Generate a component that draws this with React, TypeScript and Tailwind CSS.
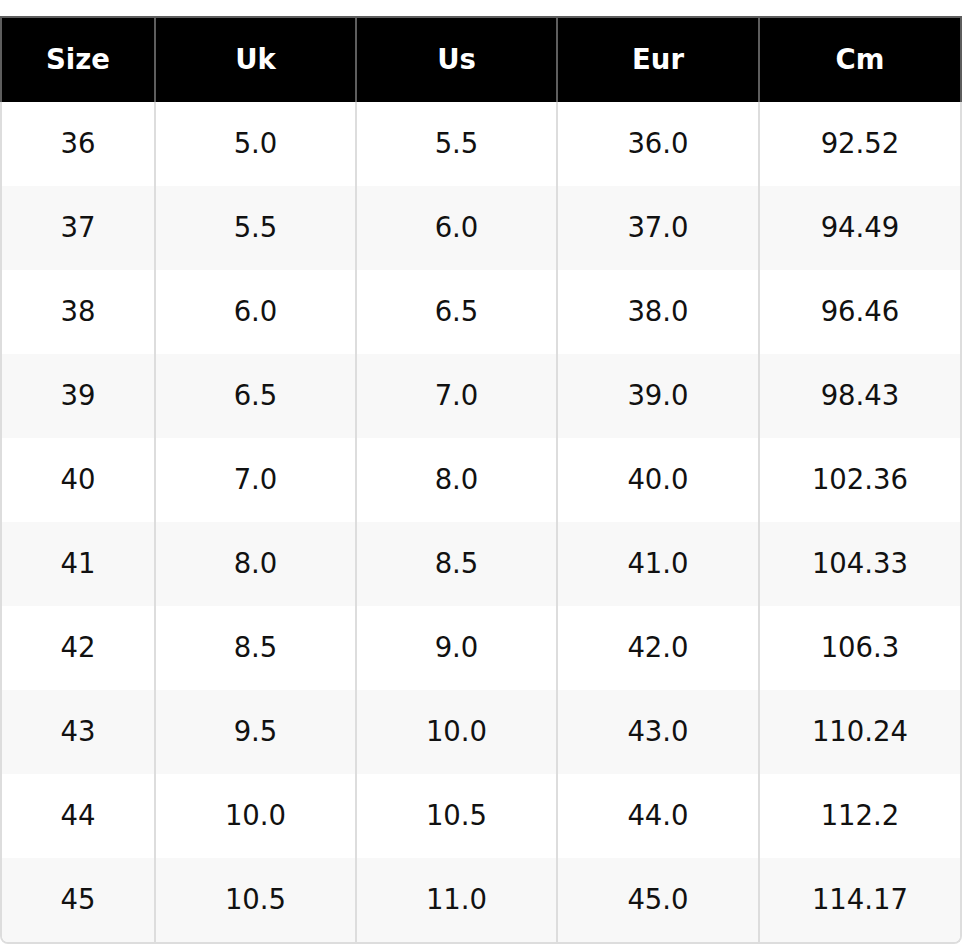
const headers = ["Size", "Uk", "Us", "Eur", "Cm"];

const rows = [
  ["36", "5.0", "5.5", "36.0", "92.52"],
  ["37", "5.5", "6.0", "37.0", "94.49"],
  ["38", "6.0", "6.5", "38.0", "96.46"],
  ["39", "6.5", "7.0", "39.0", "98.43"],
  ["40", "7.0", "8.0", "40.0", "102.36"],
  ["41", "8.0", "8.5", "41.0", "104.33"],
  ["42", "8.5", "9.0", "42.0", "106.3"],
  ["43", "9.5", "10.0", "43.0", "110.24"],
  ["44", "10.0", "10.5", "44.0", "112.2"],
  ["45", "10.5", "11.0", "45.0", "114.17"],
];

const cols = "grid grid-cols-[154px_201px_201px_202px_200px]";

export default function App() {
  return (
    <div className="w-[962px] bg-white pt-4 font-['DejaVu_Sans',sans-serif] text-[27.5px]">
      <div className={`${cols} h-[86px] border-2 border-b-0 border-[#5e5e5e] bg-black text-white font-bold`}>
        {headers.map((h, i) => (
          <div
            key={h}
            className={`flex items-center justify-center ${i < 4 ? "border-r-2 border-[#5e5e5e]" : ""}`}
          >
            {h}
          </div>
        ))}
      </div>
      <div className="overflow-hidden rounded-b-lg border-2 border-t-0 border-[#dddddd] text-[#111]">
        {rows.map((r, ri) => (
          <div key={r[0]} className={`${cols} h-[84px] ${ri % 2 ? "bg-[#f8f8f8]" : "bg-white"}`}>
            {r.map((c, i) => (
              <div
                key={i}
                className={`flex items-center justify-center ${i < 4 ? "border-r-2 border-[#dddddd]" : ""}`}
              >
                {c}
              </div>
            ))}
          </div>
        ))}
      </div>
    </div>
  );
}
